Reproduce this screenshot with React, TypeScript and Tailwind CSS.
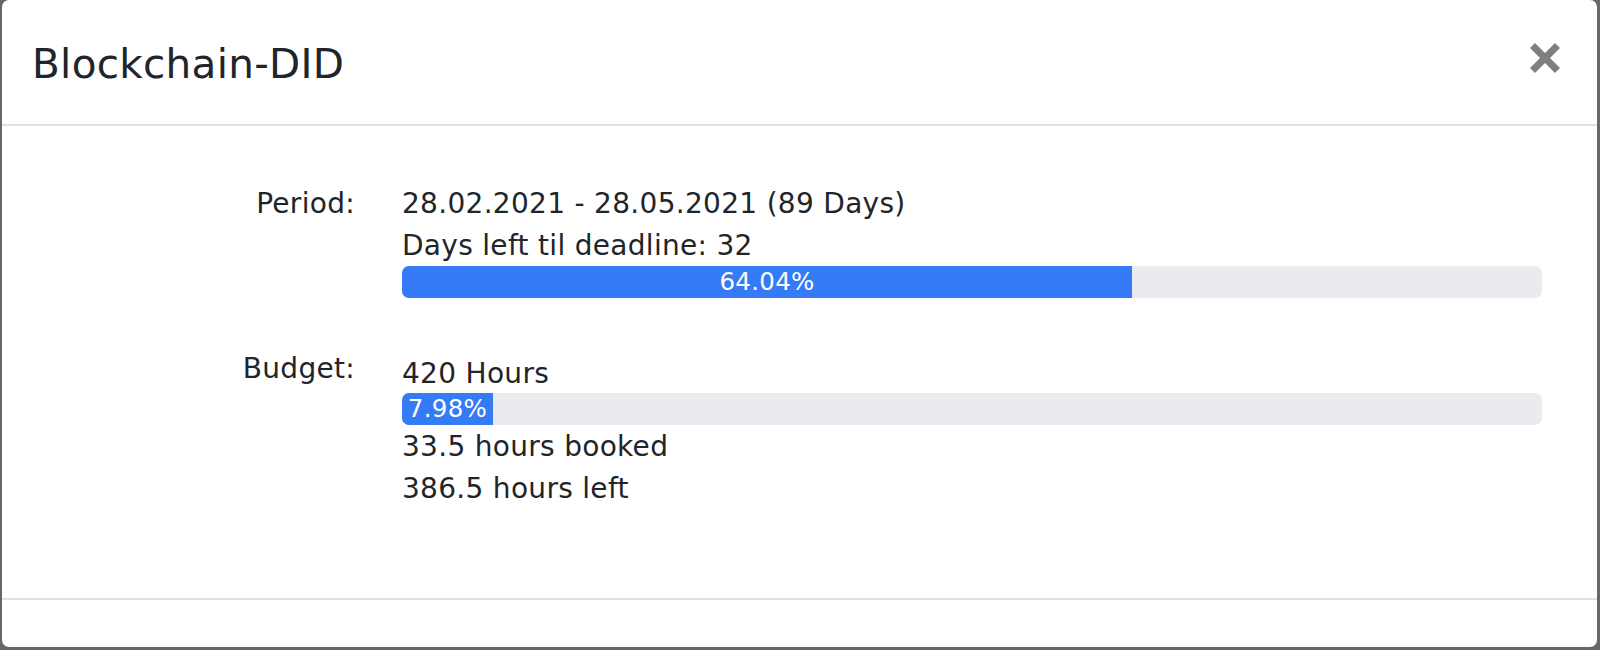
import React from "react";

function Bar({ fill, label }: { fill: number; label: string }) {
  return (
    <div className="h-[32px] w-full rounded-[7px] bg-[#e9ebef] overflow-hidden flex">
      <div
        className="h-full bg-[#357af6] text-white text-[24.5px] leading-[32px] text-center whitespace-nowrap"
        style={{ width: `${fill}%` }}
      >
        {label}
      </div>
    </div>
  );
}

export default function App() {
  return (
    <div className="relative w-[1600px] h-[650px] overflow-hidden bg-[#676767] font-['DejaVu_Sans',sans-serif] text-[#212529] tracking-[0.3px]">
      <div className="absolute left-[630px] top-[644px] flex gap-[60px] text-[30px] font-bold text-[#151515] whitespace-nowrap">
        <span>Statistiken</span>
        <span>Arbeitsstunden</span>
      </div>
      <div className="absolute left-[2px] top-0 w-[1595px] h-[647px] bg-white rounded-[7px] flex flex-col">
        <div className="h-[126px] border-b-2 border-[#dee2e6] flex justify-between items-start pl-[30px] pr-[37px]">
          <h4 className="pt-[34px] text-[40.5px] leading-[60px] font-normal">Blockchain-DID</h4>
          <svg className="mt-[43px]" width="30" height="30" viewBox="0 0 30 30">
            <line x1="2.5" y1="2.5" x2="27.5" y2="27.5" stroke="#7f7f7f" strokeWidth="7" />
            <line x1="27.5" y1="2.5" x2="2.5" y2="27.5" stroke="#7f7f7f" strokeWidth="7" />
          </svg>
        </div>
        <div className="flex-1 pt-[57px] pr-[55px] text-[28px] leading-[42px]">
          <div className="flex">
            <div className="w-[353px] shrink-0 text-right">Period:</div>
            <div className="ml-[47px] flex-1 flex flex-col">
              <div>28.02.2021 - 28.05.2021 (89 Days)</div>
              <div className="h-[41px]">Days left til deadline: 32</div>
              <Bar fill={64.04} label="64.04%" />
            </div>
          </div>
          <div className="flex mt-[50px]">
            <div className="w-[353px] shrink-0 text-right">Budget:</div>
            <div className="ml-[47px] flex-1 flex flex-col pt-[5px]">
              <div className="h-[40px]">420 Hours</div>
              <Bar fill={7.98} label="7.98%" />
              <div className="mt-[1px]">33.5 hours booked</div>
              <div>386.5 hours left</div>
            </div>
          </div>
        </div>
        <div className="h-[49px] border-t-2 border-[#dee2e6]" />
      </div>
    </div>
  );
}
